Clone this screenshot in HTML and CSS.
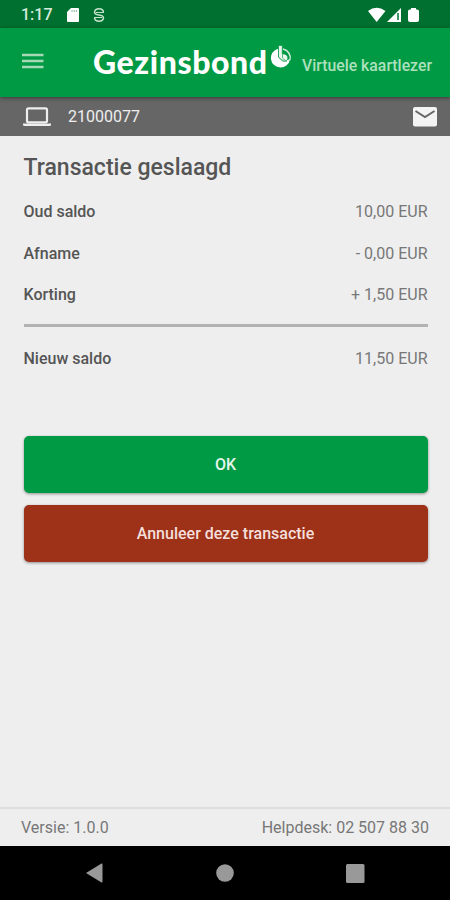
FILE: index.html
```html
<!DOCTYPE html>
<html lang="nl">
<head>
<meta charset="utf-8">
<title>Virtuele kaartlezer</title>
<link rel="stylesheet" href="styles.css">
</head>
<body>
<div class="statusbar">
  <span class="clock">1:17</span>
  <svg class="sd" width="12" height="14" viewBox="0 0 12 14"><path fill="#fff" d="M4 0h7q1 0 1 1v12q0 1-1 1H1q-1 0-1-1V4z"/><path stroke="#007030" stroke-width=".8" opacity=".6" d="M5 2v2M7.200 2v2M9.400 2v2"/></svg>
  <svg class="sync" width="12" height="14" viewBox="0 0 12 14" fill="none" stroke="#c5e2cd" stroke-width="1.500"><path d="M10.500 4.200Q10 .8 6 .8T1.500 4Q1.500 6.500 6 7t4.500 3.200Q10 13.200 6 13.200T1.500 9.800"/><path stroke-width="1.100" d="M3 4.500h8M1 9.500h8"/></svg>
  <svg class="signals" width="52" height="16" viewBox="0 0 52 16" fill="#fff"><path d="M0 4Q8.500-2.500 17.500 4L8.700 15z"/><path d="M33 1v14H19z"/><path stroke="#007030" stroke-width="1.500" d="M30 6v7"/><path d="M43 1h5v1.500h1q2 0 2 1.500v9q0 2-2 2h-7q-2 0-2-2V4q0-1.500 2-1.500h1z"/></svg>
</div>
<header class="appbar">
  <svg class="menu" width="22" height="16" viewBox="0 0 22 16"><path stroke="#a5d9b6" stroke-width="2.400" d="M0 2h21.500M0 8h21.500M0 14h21.500"/></svg>
  <span class="brand">Gezinsbond</span>
  <svg class="mark" width="22" height="24" viewBox="0 0 22 24"><path fill="#fff" d="M8 3.700A9.600 9.600 0 1 0 20 14.500L14 15 8 12z"/><path fill="none" stroke="#d8efdf" stroke-width="1.400" d="M13 4a9 9 0 0 1 7 11"/><path fill="#e8f6ec" stroke="#009944" stroke-width=".7" d="M8.500.5h3.800v8.200q6 .3 5.500 5-1 3.300-5.300 2.300L8.500 12z"/><path fill="none" stroke="#5fb97c" stroke-width="1" d="M12.500 9v4l4 3.500M9 13l5 3h3"/></svg>
  <span class="subtitle">Virtuele kaartlezer</span>
</header>
<div class="terminal">
  <svg class="laptop" width="28" height="20" viewBox="0 0 28 20"><rect x="4" y="1.300" width="20" height="14" rx="1.500" fill="none" stroke="#eee" stroke-width="2.200"/><path fill="#eee" d="M0 16.500h28v1q0 1.500-1.500 1.500h-25Q0 19 0 17.500z"/></svg>
  <span class="number">21000077</span>
  <svg class="mail" width="24" height="20" viewBox="0 0 24 20"><rect width="24" height="19.500" rx="2" fill="#f3f3f3"/><path fill="none" stroke="#666" stroke-width="2" d="m2.500 4 9.500 6 9.500-6"/></svg>
</div>
<main>
  <h1>Transactie geslaagd</h1>
  <dl>
    <div class="row"><dt>Oud saldo</dt><dd>10,00 EUR</dd></div>
    <div class="row"><dt>Afname</dt><dd>- 0,00 EUR</dd></div>
    <div class="row"><dt>Korting</dt><dd>+ 1,50 EUR</dd></div>
    <div class="row total"><dt>Nieuw saldo</dt><dd>11,50 EUR</dd></div>
  </dl>
  <button class="ok">OK</button>
  <button class="cancel">Annuleer deze transactie</button>
</main>
<footer><span>Versie: 1.0.0</span><span class="help">Helpdesk: 02 507 88 30</span></footer>
<nav>
  <svg width="17" height="20" viewBox="0 0 17 20"><path fill="#999" d="M0 10 15.500.6q1-.4 1 .8v17.200q0 1.200-1 .8z"/></svg>
  <svg width="18" height="18" viewBox="0 0 18 18"><circle cx="9" cy="9" r="8.800" fill="#999"/></svg>
  <svg width="19" height="19" viewBox="0 0 19 19"><rect width="18.500" height="19" rx="1.500" fill="#999"/></svg>
</nav>
</body>
</html>
```
FILE: styles.css
```css
* { box-sizing: border-box; }
body {
  margin: 0;
  height: 900px;
  display: flex;
  flex-direction: column;
  overflow: hidden;
  background: #eee;
  color: #555;
  font: 16px/20px Roboto, sans-serif;
}
svg { display: block; flex: none; }
.statusbar {
  height: 28px;
  flex: none;
  display: flex;
  align-items: center;
  padding: 2px 30px 0 21px;
  background: #007030;
}
.clock { width: 46px; color: #d5eadb; font-weight: 500; }
.sync { margin-left: 14px; }
.signals { margin-left: auto; }
.appbar {
  height: 69px;
  flex: none;
  display: flex;
  align-items: center;
  padding-left: 22px;
  background: #009944;
  z-index: 1;
  box-shadow: 0 1px 4px rgba(0, 0, 0, .45);
}
.menu { margin-bottom: 4px; }
.brand {
  width: 177px;
  margin: 0 0 2px 49px;
  color: #fff;
  font: 900 32px/40px Lato, sans-serif;
  letter-spacing: .6px;
  white-space: nowrap;
}
.mark { margin-bottom: 11px; }
.subtitle {
  margin: 6px 0 0 10px;
  color: #ade0bd;
  font-weight: 500;
  font-size: 15.8px;
  white-space: nowrap;
}
.terminal {
  height: 39px;
  flex: none;
  display: flex;
  align-items: center;
  padding: 0 13px 0 23px;
  background: #666;
  color: #eee;
}
.number { margin-left: 17px; }
.mail { margin-left: auto; }
main { flex: 1; padding: 18px 22.500px 0 23.500px; }
h1 { margin: 0; font-size: 23px; line-height: 28px; font-weight: 500; }
dl { margin: 9px 0 0; }
.row { height: 41.300px; display: flex; justify-content: space-between; align-items: center; }
.row:nth-child(2), .row:nth-child(3) { padding-top: 1.500px; }
dt { font-weight: 500; }
dd { margin: 0; color: #777; }
.total { height: 67px; border-top: 3px solid #b2b2b2; margin-top: 9px; }
button {
  display: block;
  width: 100%;
  height: 57px;
  padding: 2px 0 0;
  border: 0;
  border-radius: 5px;
  color: #e5f5ea;
  font: 500 16px/20px Roboto, sans-serif;
  box-shadow: 0 1px 3px rgba(0, 0, 0, .4);
}
.ok { margin-top: 45px; background: #009944; }
.cancel { margin-top: 12px; background: #9e3219; color: #f5dfdb; }
footer {
  height: 39px;
  flex: none;
  display: flex;
  justify-content: space-between;
  align-items: center;
  padding: 0 21px;
  border-top: 2px solid #ddd;
  color: #777;
}
nav {
  height: 54px;
  flex: none;
  display: flex;
  justify-content: space-between;
  align-items: center;
  padding: 0 85px 0 86px;
  background: #000;
}
```
